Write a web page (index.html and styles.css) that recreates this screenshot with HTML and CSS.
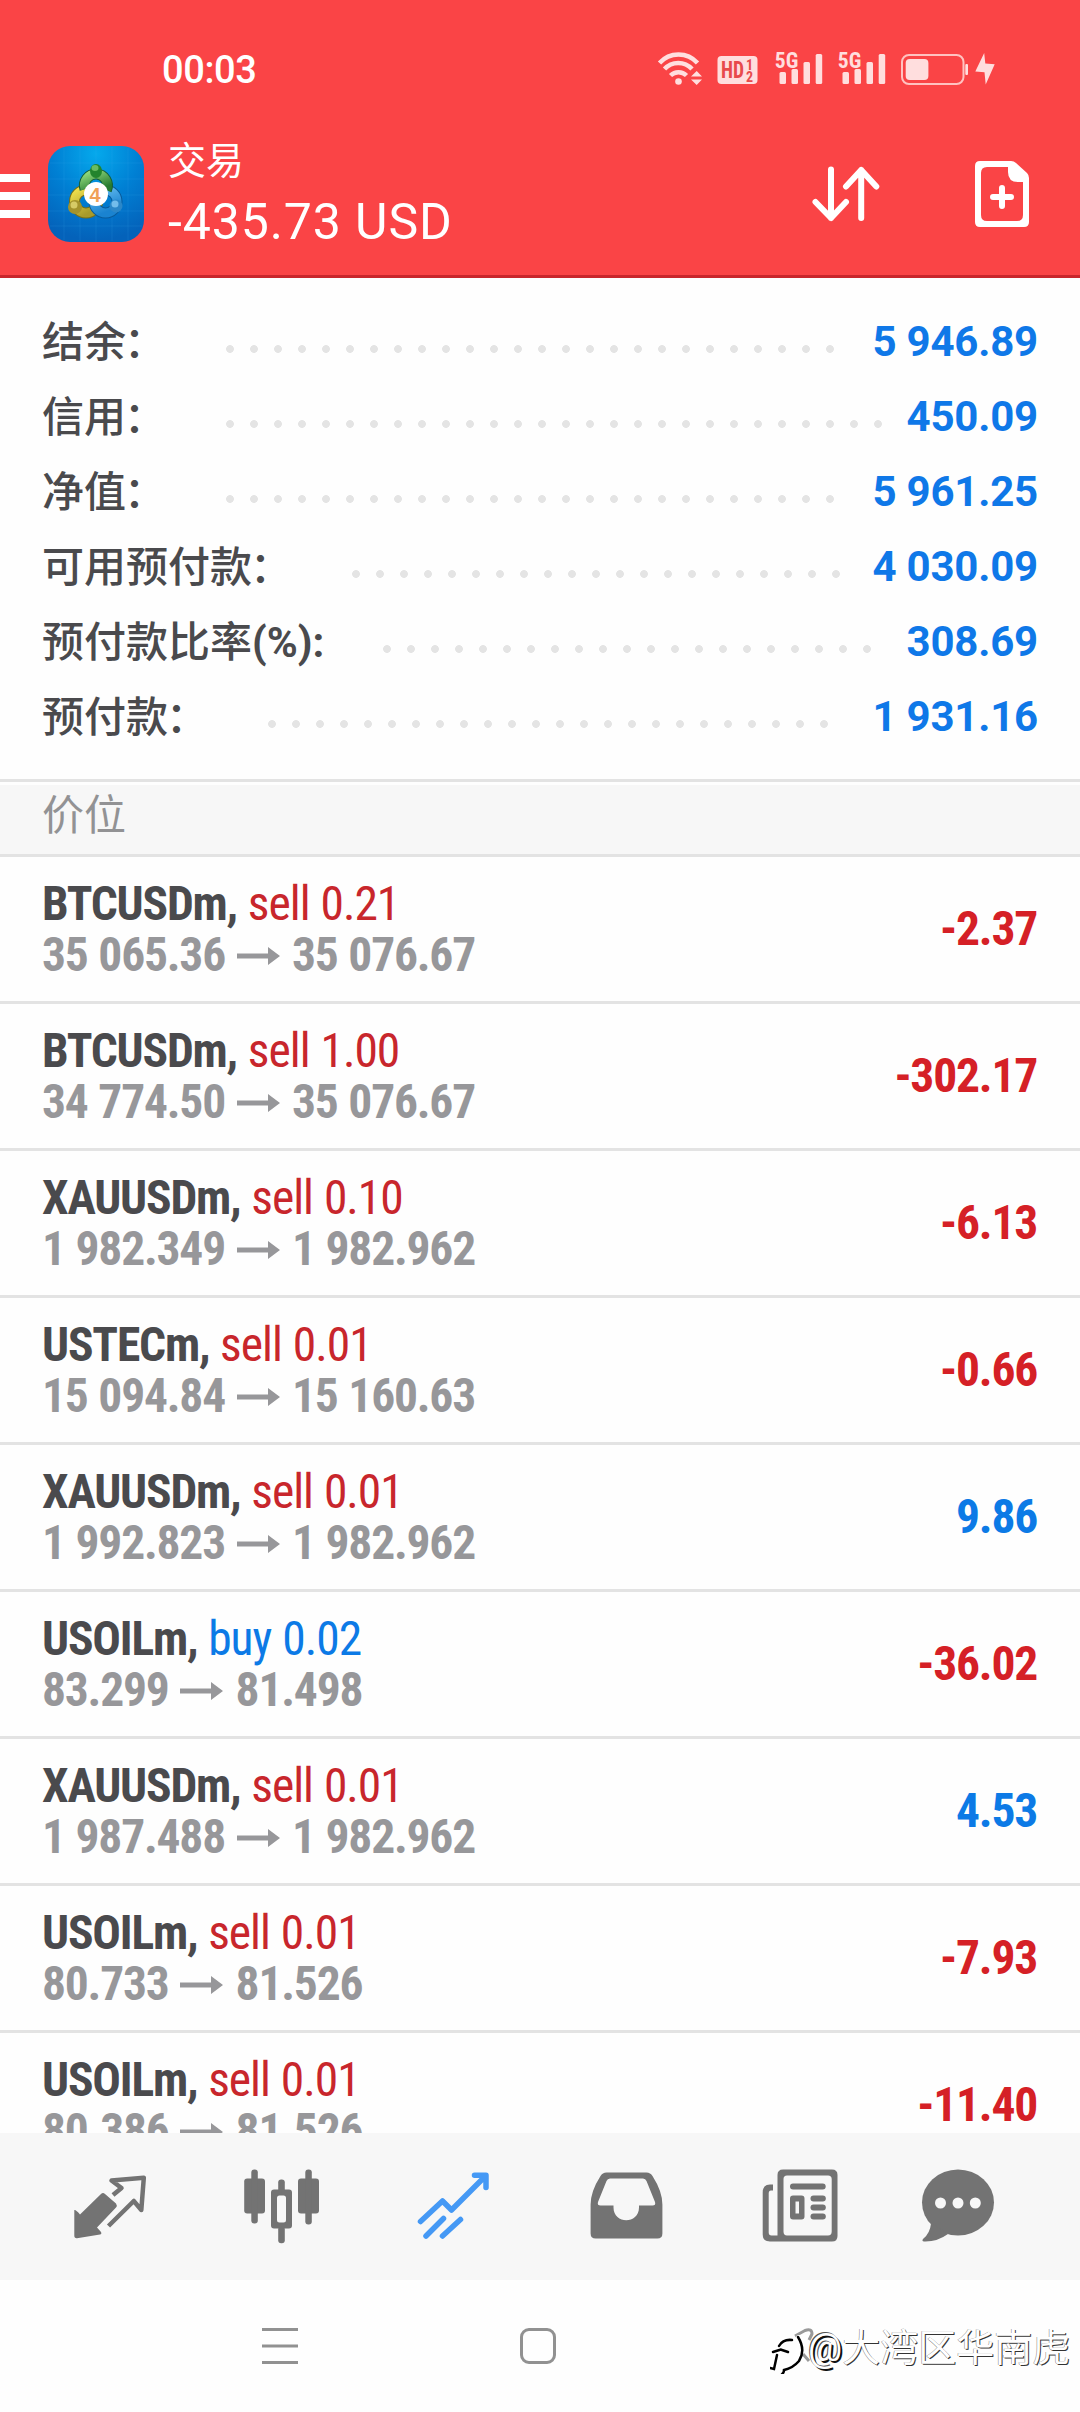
FILE: index.html
```html
<!DOCTYPE html>
<html lang="zh-CN">
<head>
<meta charset="utf-8">
<title>交易</title>
<link rel="stylesheet" href="styles.css">
</head>
<body>
<div class="screen">
  <header class="header">
    <div class="status">
      <span class="clock">00:03</span>
      <div class="status-icons">
        <svg class="wifi" width="46" height="56" viewBox="657 40 46 56" fill="#ffdede"><g fill="none" stroke="#ffdede" stroke-width="4.500"><path d="M659.500 63A25.400 25.400 0 0 1 697.500 63"/><path d="M664.500 69A18.500 18.500 0 0 1 692 69"/><path d="M670.500 75.500A11.500 11.500 0 0 1 686.500 75.500"/></g><circle cx="678.500" cy="81.500" r="3.300"/><path d="M691 76.500L696.700 71L702 76.500ZM691 79.500H702L696.700 85Z"/></svg>
        <svg class="hd" width="41" height="56" viewBox="716.500 40 41 56"><rect x="717" y="56" width="40" height="28" rx="4" fill="#ffdede"/><g class="tiny" fill="#e84a4c"><text x="720.500" y="78" font-size="23" textLength="23" lengthAdjust="spacingAndGlyphs">HD</text><text x="745.500" y="69.500" font-size="14">1</text><text x="745.500" y="81.500" font-size="14">2</text></g></svg>
        <svg class="signal" width="48" height="56" viewBox="775 40 48 56" fill="#ffdede"><text class="tiny" x="774.800" y="67.500" font-size="22" textLength="23.500" lengthAdjust="spacingAndGlyphs">5G</text><rect x="779.500" y="72" width="6.500" height="12" rx="1.500"/><rect x="791.500" y="69" width="6.500" height="15" rx="1.500"/><rect x="803.500" y="62" width="6.500" height="22" rx="1.500"/><rect x="815.700" y="54" width="6.500" height="30" rx="1.500"/></svg>
        <svg class="signal2" width="48" height="56" viewBox="775 40 48 56" fill="#ffdede"><text class="tiny" x="774.800" y="67.500" font-size="22" textLength="23.500" lengthAdjust="spacingAndGlyphs">5G</text><rect x="779.500" y="72" width="6.500" height="12" rx="1.500"/><rect x="791.500" y="69" width="6.500" height="15" rx="1.500"/><rect x="803.500" y="62" width="6.500" height="22" rx="1.500"/><rect x="815.700" y="54" width="6.500" height="30" rx="1.500"/></svg>
        <svg class="battery" width="96" height="56" viewBox="900 40 96 56" fill="#ffdede"><rect x="902" y="55" width="61.500" height="29" rx="7" fill="none" stroke="#ffc2c0" stroke-width="2"/><rect x="905.700" y="59" width="22.700" height="21" rx="4"/><rect x="965.300" y="64" width="2.700" height="11" rx="1"/><path d="M984.200 53L975.300 71.500L984.500 72.300L985.700 84.500L994.700 64.300L985.300 63.500Z"/></svg>
      </div>
    </div>
    <div class="toolbar">
      <svg class="menu" width="30" height="44" viewBox="0 0 30 44" fill="#fff"><path d="M0 0H30V8H0ZM0 18H30V26H0ZM0 36H30V44H0Z"/></svg>
      <svg class="logo" width="96" height="96" viewBox="0 0 96 96">
        <defs>
          <radialGradient id="sky" cx=".5" cy=".08" r=".9"><stop offset="0" stop-color="#05a9ec"/><stop offset=".5" stop-color="#0080d4"/><stop offset="1" stop-color="#0462ba"/></radialGradient>
          <linearGradient id="green" x2=".6" y2="1"><stop stop-color="#8fd87b"/><stop offset="1" stop-color="#277b30"/></linearGradient>
          <linearGradient id="gold" x2=".6" y2="1"><stop stop-color="#f0e04d"/><stop offset="1" stop-color="#a89a2a"/></linearGradient>
          <linearGradient id="blue" x2=".4" y2="1"><stop stop-color="#66bdf0"/><stop offset="1" stop-color="#1a83d0"/></linearGradient>
        </defs>
        <rect width="96" height="96" rx="22" fill="url(#sky)"/>
        <path d="M16 2V94M32 1V95M48 0V96M64 1V95M80 2V94M2 17H94M0 33H96M0 49H96M0 65H96M2 80H94" stroke="#43b4f4" stroke-opacity=".15" fill="none"/>
        <g fill="none" stroke-width="11">
          <circle cx="38" cy="55.500" r="11.500" stroke="#766f18"/><circle cx="38" cy="55.500" r="11.500" stroke="url(#gold)" stroke-width="9"/>
          <circle cx="57.500" cy="55.500" r="11.500" stroke="#075b9c"/><circle cx="57.500" cy="55.500" r="11.500" stroke="url(#blue)" stroke-width="9"/>
          <path d="M37 43A11.500 11.500 0 1 1 58.500 44" stroke="#145c35"/><path d="M37 43A11.500 11.500 0 1 1 58.500 44" stroke="url(#green)" stroke-width="9"/>
        </g>
        <ellipse cx="48" cy="25" rx="6" ry="7" fill="#23842d"/><ellipse cx="47" cy="22" rx="3.500" ry="3" fill="#69bb61"/>
        <circle cx="27" cy="61" r="7" fill="#a3932c"/><circle cx="26" cy="59" r="3.500" fill="#d6cb66"/>
        <circle cx="68" cy="60" r="6.500" fill="#2b87c8"/><circle cx="67" cy="58" r="3.500" fill="#73bdeb"/>
        <circle cx="48" cy="48" r="12" fill="#fff"/>
        <text class="four" x="47" y="55.500" text-anchor="middle">4</text>
      </svg>
      <div class="heading"><h1>交易</h1><div class="total">-435.73 USD</div></div>
      <svg class="sort" width="68" height="56" viewBox="812 166 68 56" fill="none" stroke="#fff" stroke-width="6" stroke-linecap="round" stroke-linejoin="round"><path d="M831 169.500V218M815.500 202L831 218L846 202M861.200 218V170M846 186.500L861.200 170L876.300 186.500"/></svg>
      <svg class="order" width="54" height="66" viewBox="975 161 54 66" fill="#fff"><path fill-rule="evenodd" d="M980 161H1011Q1014 161 1016 163L1027 173Q1029 175 1029 178V222Q1029 227 1024 227H980Q975 227 975 222V166Q975 161 980 161ZM987 167Q981 167 981 173V215Q981 221 987 221H1017Q1023 221 1023 215V182H1018Q1008 182 1008 172V167Z"/><path d="M993 197H1011M1002 188V206" stroke="#fff" stroke-width="6" stroke-linecap="round"/></svg>
    </div>
  </header>

  <section class="summary">
    <div class="sum"><span>结余<em>：</em></span><i class="dots"></i><b>5 946.89</b></div>
    <div class="sum"><span>信用<em>：</em></span><i class="dots"></i><b>450.09</b></div>
    <div class="sum"><span>净值<em>：</em></span><i class="dots"></i><b>5 961.25</b></div>
    <div class="sum"><span>可用预付款<em>：</em></span><i class="dots"></i><b>4 030.09</b></div>
    <div class="sum"><span>预付款比率<strong>(%):</strong></span><i class="dots"></i><b>308.69</b></div>
    <div class="sum"><span>预付款<em>：</em></span><i class="dots"></i><b>1 931.16</b></div>
  </section>

  <h2 class="band">价位</h2>

  <svg class="defs"><symbol id="to" viewBox="0 0 43 18"><path d="M0 6.500H31V0L43 9L31 18V11.500H0Z" fill="#97979a"/></symbol></svg>
  <main class="list">
    <div class="row"><div><p>BTCUSDm, <span class="sell">sell 0.21</span></p><p class="prices">35 065.36 <svg class="to"><use href="#to"/></svg> 35 076.67</p></div><b class="loss">-2.37</b></div>
    <div class="row"><div><p>BTCUSDm, <span class="sell">sell 1.00</span></p><p class="prices">34 774.50 <svg class="to"><use href="#to"/></svg> 35 076.67</p></div><b class="loss">-302.17</b></div>
    <div class="row"><div><p>XAUUSDm, <span class="sell">sell 0.10</span></p><p class="prices">1 982.349 <svg class="to"><use href="#to"/></svg> 1 982.962</p></div><b class="loss">-6.13</b></div>
    <div class="row"><div><p>USTECm, <span class="sell">sell 0.01</span></p><p class="prices">15 094.84 <svg class="to"><use href="#to"/></svg> 15 160.63</p></div><b class="loss">-0.66</b></div>
    <div class="row"><div><p>XAUUSDm, <span class="sell">sell 0.01</span></p><p class="prices">1 992.823 <svg class="to"><use href="#to"/></svg> 1 982.962</p></div><b class="gain">9.86</b></div>
    <div class="row"><div><p>USOILm, <span class="buy">buy 0.02</span></p><p class="prices">83.299 <svg class="to"><use href="#to"/></svg> 81.498</p></div><b class="loss">-36.02</b></div>
    <div class="row"><div><p>XAUUSDm, <span class="sell">sell 0.01</span></p><p class="prices">1 987.488 <svg class="to"><use href="#to"/></svg> 1 982.962</p></div><b class="gain">4.53</b></div>
    <div class="row"><div><p>USOILm, <span class="sell">sell 0.01</span></p><p class="prices">80.733 <svg class="to"><use href="#to"/></svg> 81.526</p></div><b class="loss">-7.93</b></div>
    <div class="row"><div><p>USOILm, <span class="sell">sell 0.01</span></p><p class="prices">80.386 <svg class="to"><use href="#to"/></svg> 81.526</p></div><b class="loss">-11.40</b></div>
  </main>

  <nav class="tabs">
    <svg viewBox="70 2162.500 80 88" fill="#737373"><path d="M74.300 2209.500Q76 2209 80 2214L101 2193.500Q103 2191.500 105 2193.500L116 2203Q117.500 2205 116 2207L97 2227L101 2231.500Q102 2233.500 100 2234L77 2237.700Q74.300 2238 74.300 2235Z"/><path d="M113 2194.500L121.500 2187.500L111.500 2180L143.800 2177.300L141.300 2209.500L133.800 2200.500L108.500 2225.500" fill="none" stroke="#737373" stroke-width="4.500" stroke-linejoin="round"/></svg>
    <svg viewBox="242 2162.500 80 88" fill="#737373"><rect x="244.200" y="2178" width="20.800" height="35" rx="3"/><rect x="251.300" y="2169" width="6.500" height="54" rx="3"/><path fill-rule="evenodd" d="M274 2189H289Q292 2189 292 2192V2225Q292 2228 289 2228H274Q271 2228 271 2225V2192Q271 2189 274 2189ZM279.500 2195Q277 2195 277 2197.500V2219.500Q277 2222 279.500 2222H283.500Q286 2222 286 2219.500V2197.500Q286 2195 283.500 2195Z"/><rect x="278.200" y="2179" width="6.600" height="13" rx="3"/><rect x="278.200" y="2226" width="6.600" height="16.700" rx="3"/><rect x="298" y="2178" width="21" height="35" rx="3"/><rect x="305.300" y="2169" width="6.500" height="55" rx="3"/></svg>
    <svg viewBox="414 2162.500 80 88" fill="none" stroke="#4599f5" stroke-width="5.500" stroke-linecap="round" stroke-linejoin="round"><path d="M420.500 2221L442.500 2200.500L451.500 2209.500L485 2176M474.500 2174.700H486V2187"/><path d="M426 2235.500L443.500 2218M442.500 2235.500L460.500 2219"/></svg>
    <svg viewBox="587 2162.500 80 88" fill="#737373"><path fill-rule="evenodd" d="M606.500 2172H646.500Q650.500 2172 652.500 2175.500Q662.400 2191 662.400 2204V2233Q662.400 2238 657.400 2238H595.600Q590.600 2238 590.600 2233V2204Q590.600 2191 600.500 2175.500Q602.500 2172 606.500 2172ZM610 2178Q607.500 2178 606.500 2180.500L598 2201.500Q597 2205 600.500 2205H613.500V2207C613.500 2224 639 2224 639 2207V2205H652.500Q656 2205 655 2201.500L646.500 2180.500Q645.500 2178 643 2178Z"/></svg>
    <svg viewBox="760 2162.500 80 88" fill="#737373"><path fill-rule="evenodd" d="M783 2169H832Q837.500 2169 837.500 2174.500V2235.500Q837.500 2241 832 2241H770Q762.700 2241 762.700 2234V2192Q762.700 2184 770 2184H773V2190H771Q768.700 2190 768.700 2193V2232Q768.700 2235 771.500 2235H777.500V2174.500Q777.500 2169 783 2169ZM787 2175Q783.500 2175 783.500 2178.500V2231Q783.500 2235 787 2235H828Q831.700 2235 831.700 2231V2178.500Q831.700 2175 828 2175Z"/><rect x="790" y="2183" width="35.700" height="6" rx="3"/><path fill-rule="evenodd" d="M793 2195H801.500Q804.500 2195 804.500 2198V2216Q804.500 2219 801.500 2219H793Q790 2219 790 2216V2198Q790 2195 793 2195ZM795.500 2201V2213H799V2201Z"/><rect x="810.500" y="2195" width="15.300" height="6" rx="3"/><rect x="810.500" y="2204" width="15.300" height="6" rx="3"/><rect x="810.500" y="2213" width="15.300" height="6" rx="3"/></svg>
    <svg viewBox="918 2162.500 80 88" fill="#737373"><ellipse cx="958" cy="2202" rx="36" ry="33"/><path d="M927 2219L931 2223Q930 2233 923 2238.500Q921.500 2240.500 924 2241Q937 2241.500 948 2233.500Z"/><g fill="#f7f7f7"><circle cx="940.500" cy="2202.500" r="5.500"/><circle cx="958" cy="2202.500" r="5.500"/><circle cx="975.300" cy="2202.500" r="5.500"/></g></svg>
  </nav>

  <footer class="system">
    <svg width="36" height="36" viewBox="0 0 36 36" stroke="#919191" stroke-width="3"><path d="M0 1.500H36M0 18H36M0 34.500H36"/></svg>
    <svg width="36" height="36" viewBox="0 0 36 36" fill="none" stroke="#919191" stroke-width="3"><rect x="1.500" y="1.500" width="33" height="33" rx="7.500"/></svg>
    <svg width="36" height="36" viewBox="0 0 36 36" fill="none" stroke="#999" stroke-width="3" stroke-linejoin="round"><path d="M10 8L20 2.500Q27 0 27 6L24 12M18 26L24 33"/></svg>
  </footer>
  <div class="watermark">
    <svg width="38" height="52" viewBox="770 2322 38 52" fill="none" stroke-linecap="round"><g stroke="#fff" stroke-width="6"><path d="M799 2338Q804 2356 784 2370M775 2366L779 2350M778 2344Q783 2338 793 2340"/></g><g stroke="#000" stroke-width="2.500"><path d="M798 2337Q806 2350 799 2361Q793 2368 784 2370Q784 2373 782 2374M770 2368L774 2369L777 2355M773 2352L781 2349.500M779 2346Q783 2339 792 2340M782 2350L788 2352"/></g></svg><span><strong>@</strong>大湾区华南虎</span>
  </div>
</div>
</body>
</html>
```
FILE: styles.css
```css
* { box-sizing: border-box; margin: 0; padding: 0; }
body { background: #fff; }
svg { display: block; flex: none; }

.screen {
  position: relative;
  display: flex;
  flex-direction: column;
  width: 1080px;
  height: 2412px;
  overflow: hidden;
  background: #fefefe;
  color: #4a4a4d;
  font-family: Roboto, "Noto Sans CJK SC", sans-serif;
}

.header { height: 278px; background: #fa4446; border-bottom: 3px solid #c8262c; color: #fff; }
.status { display: flex; align-items: center; justify-content: space-between; height: 136px; padding: 0 84px 0 162px; }
.clock { padding-top: 3px; font-size: 38px; font-weight: 500; letter-spacing: -.4px; }
.status-icons { display: flex; }
.tiny { font-family: "Roboto Condensed", Roboto, sans-serif; font-weight: 700; }
.hd { margin-left: 13.500px; }
.signal { margin-left: 17.500px; }
.signal2 { margin-left: 15px; }
.battery { margin-left: 14px; }

.toolbar { display: flex; align-items: center; height: 139px; padding: 0 51px 24px 0; }
.menu { margin-top: 5px; }
.logo { margin-left: 18px; }
.four { font: 700 20px "Liberation Sans", sans-serif; fill: #f0a057; }
.heading { flex: 1; margin-left: 24px; }
h1 { font-size: 38px; font-weight: 400; line-height: 54px; }
.total { padding-top: 3px; font-size: 50px; line-height: 62px; letter-spacing: .9px; }
.order { margin-left: 95px; }

.summary { height: 501px; padding: 26px 42px 0; }
.sum { display: flex; height: 75px; font-size: 42px; font-weight: 500; line-height: 75px; white-space: nowrap; }
.sum span { margin-right: 58px; padding-top: 1px; }
.sum strong { margin-right: 1px; font-weight: 700; }
.sum em { margin: 0 2px 0 -2px; font-style: normal; }
.dots {
  flex: 1;
  margin-right: 6px;
  container-type: inline-size;
}
.dots::before {
  content: "";
  display: block;
  width: round(down, 100cqw, 24px);
  height: 75px;
  background: radial-gradient(circle at 4px 45px, #e4e4e4 3.500px, transparent 4.300px) 0 0 / 24px 75px repeat-x;
}
.sum b { color: #0f78e8; font-weight: 700; letter-spacing: -.2px; }

.band {
  height: 78px;
  padding-left: 42px;
  border: solid #e3e3e3;
  border-width: 3px 0;
  background: linear-gradient(#fefefe 3px, #f7f7f7 3px);
  color: #929294;
  font-size: 42px;
  font-weight: 400;
  line-height: 68px;
}

.defs { position: absolute; width: 0; height: 0; }
.list {
  height: 1276px;
  overflow: hidden;
  font-family: "Roboto Condensed", Roboto, sans-serif;
  font-size: 47.500px;
  font-weight: 700;
  line-height: 51px;
  letter-spacing: -1.200px;
  word-spacing: 1px;
}
.row { display: flex; align-items: center; justify-content: space-between; height: 147px; padding: 2px 42px 0; border-bottom: 3px solid #e3e3e3; white-space: nowrap; }
.row span { font-weight: 400; letter-spacing: -1px; }
.row b { margin: 0 1px 1px 0; font-weight: 700; }
.sell { color: #c8262c; }
.buy { color: #0c7ae6; }
.prices { color: #97979a; }
.to { display: inline-block; width: 43px; height: 18px; margin: 0 1.500px 0 1px; vertical-align: 6px; }
.loss { color: #d52026; }
.gain { color: #0c7ae6; }

.tabs {
  display: grid;
  grid-template-columns: 172px 172px 172px 173px 173px 144px;
  align-items: center;
  justify-items: center;
  height: 147px;
  padding-left: 24px;
  padding-right: 50px;
  background: #f7f7f7;
}
.tabs svg { width: 80px; height: 88px; }

.system { display: flex; align-items: center; height: 132px; padding-left: 262px; }
.system svg + svg { margin-left: 222px; }
.system svg + svg + svg { margin-left: 229px; }

.watermark { position: absolute; left: 770px; top: 2322px; display: flex; align-items: center; }
.watermark span {
  color: #fff;
  font: 400 38px/52px Roboto, "Noto Sans CJK SC", sans-serif;
  text-shadow: 1px 1px 0 #333, -.5px -.5px 0 #888;
  white-space: nowrap;
}
.watermark strong { font-weight: 400; text-shadow: 2px 2px 0 #111, -1px -1px 0 #555; }
```
